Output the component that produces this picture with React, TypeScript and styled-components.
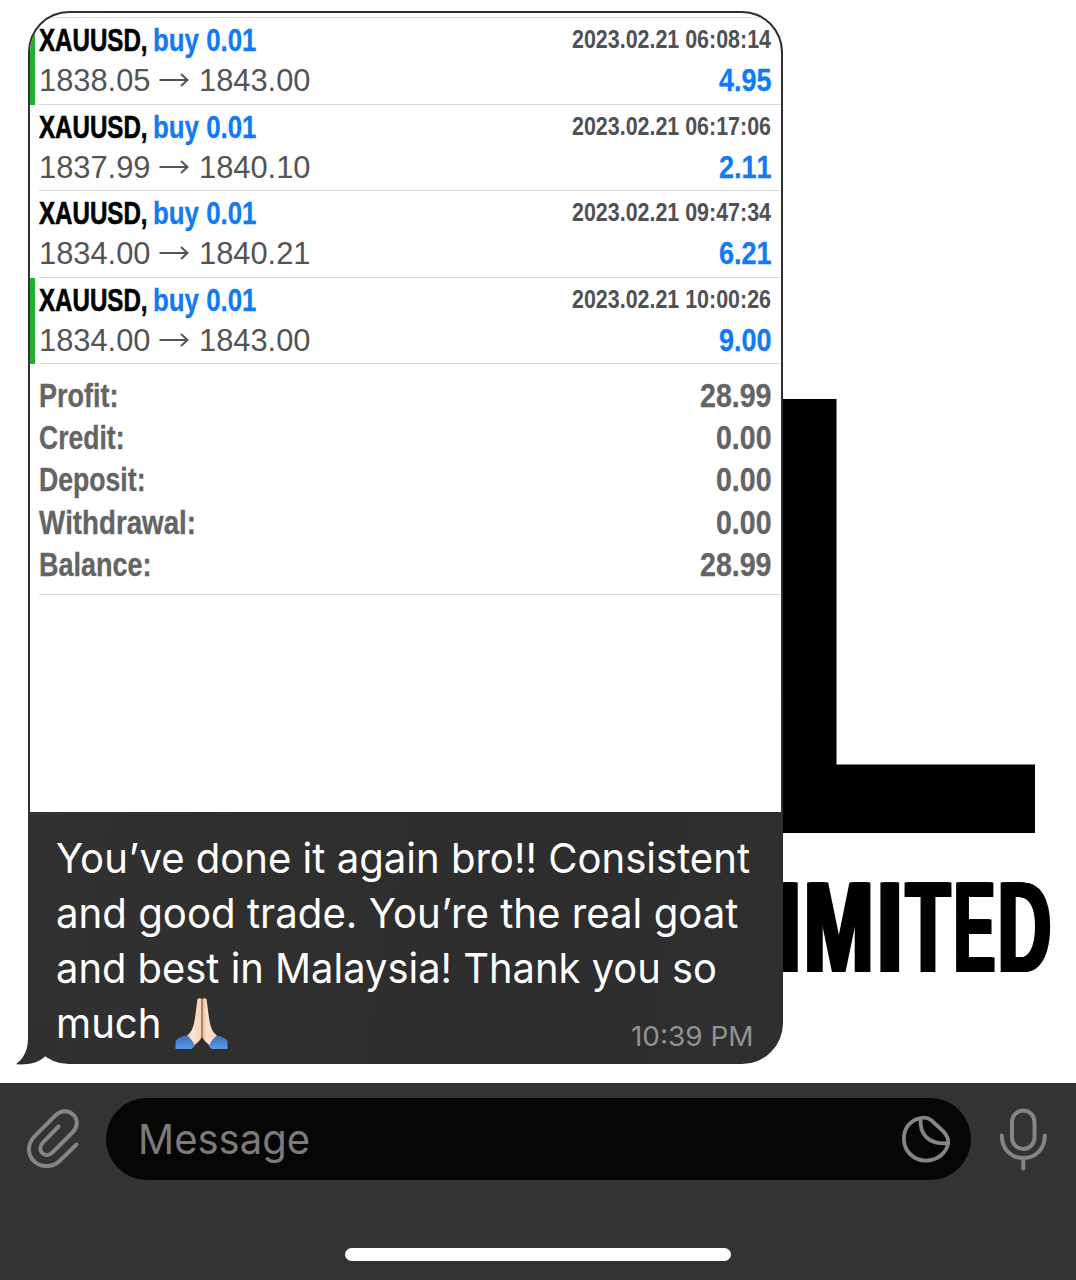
import { useLayoutEffect, useRef, useState } from "react";
import styled, { createGlobalStyle } from "styled-components";

interface Trade {
    time: string;
    open: string;
    close: string;
    profit: string;
    marked?: boolean;
}

const trades: Trade[] = [
    { time: "2023.02.21 06:08:14", open: "1838.05", close: "1843.00", profit: "4.95", marked: true },
    { time: "2023.02.21 06:17:06", open: "1837.99", close: "1840.10", profit: "2.11" },
    { time: "2023.02.21 09:47:34", open: "1834.00", close: "1840.21", profit: "6.21" },
    { time: "2023.02.21 10:00:26", open: "1834.00", close: "1843.00", profit: "9.00", marked: true },
];

const totals = [
    { label: "Profit:", labelWidth: 79.5, value: "28.99", valueWidth: 71.5 },
    { label: "Credit:", labelWidth: 85.5, value: "0.00", valueWidth: 55.5 },
    { label: "Deposit:", labelWidth: 106.5, value: "0.00", valueWidth: 55.5 },
    { label: "Withdrawal:", labelWidth: 157, value: "0.00", valueWidth: 55.5 },
    { label: "Balance:", labelWidth: 112.5, value: "28.99", valueWidth: 71.5 },
];

const lines = [
    { text: "You’ve done it again bro!! Consistent", width: 694 },
    { text: "and good trade. You’re the real goat", width: 682.5 },
    { text: "and best in Malaysia! Thank you so", width: 661 },
];

const GlobalStyle = createGlobalStyle`
  * { box-sizing: border-box; }
  body {
    margin: 0;
    background: #fefefe;
  }
`;

const Screen = styled.div`
  position: relative;
  display: flex;
  flex-direction: column;
  width: 1076px;
  height: 1280px;
  overflow: hidden;
  font-family: "Liberation Sans", Arial, sans-serif;
  font-kerning: none;
`;

/* wallpaper logo behind the chat */
const Wallpaper = styled.div`
  position: absolute;
  top: 399px;
  left: 740px;
  width: 336px;
`;

const LogoMark = styled.svg`
  display: block;
  width: 296px;
  height: 434px;
`;

const LogoText = styled.div`
  display: flex;
  gap: 3.5px;
  margin: 24px 0 0 35.5px;
  color: #000;
  font-size: 130px;
  font-weight: 700;
  line-height: 140px;
  text-shadow: 4px 0 #000, -4px 0 #000, 2px 0 #000, -2px 0 #000;
`;

const Chat = styled.div`
  position: relative;
  height: 1083px;
  padding: 11px 0 0 28px;
`;

const Bubble = styled.div`
  display: flex;
  flex-direction: column;
  width: 755px;
  height: 1053px;
  padding: 2px;
  border-radius: 41px;
  background: linear-gradient(100deg, #323232, #2d2d2d 70%, #2f2f2f);
`;

const Tail = styled.svg`
  position: absolute;
  top: 1023px;
  left: 14px;
  width: 44px;
  height: 42px;
`;

const Report = styled.div`
  height: 799px;
  padding-top: 4px;
  border-radius: 39px 39px 0 0;
  background: #fff;
  overflow: hidden;
`;

const ReportBody = styled.div`
  border-top: 1px solid #dcdcdc;
`;

const TradeRow = styled.div<{ $marked?: boolean }>`
  height: 86.5px;
  padding-left: 4px;
  border-left: 5px solid ${({ $marked }) => ($marked ? "#20b030" : "transparent")};
`;

const TradeContent = styled.div`
  height: 100%;
  padding: 2px 10px 0 0;
  border-bottom: 1px solid #dadada;
`;

const Line = styled.div`
  display: flex;
  justify-content: space-between;
  height: 40.2px;
  line-height: 40px;
`;

const Group = styled.div`
  display: flex;
  align-items: center;
`;

const Symbol = styled.div`
  color: #000;
  font-size: 31.5px;
  font-weight: 700;
  margin-right: 5px;
  -webkit-text-stroke: 0.6px #000;
`;

const Side = styled.div`
  color: #107bf4;
  font-size: 31.5px;
  font-weight: 700;
  -webkit-text-stroke: 0.3px #107bf4;
`;

const Time = styled.div`
  color: #505154;
  font-size: 25px;
  font-weight: 700;
  line-height: 38px;
`;

const Price = styled.div`
  color: #535456;
  font-size: 31.5px;
`;

const Arrow = styled.svg`
  width: 30px;
  height: 16px;
  margin: 0 10.5px 0 8px;
`;

const Totals = styled.div`
  height: 231px;
  margin-left: 9px;
  padding: 10.5px 10px 0 0;
  border-bottom: 1px solid #dcdcdc;
`;

const TotalRow = styled.div`
  display: flex;
  justify-content: space-between;
  height: 42.4px;
  color: #646464;
  font-size: 32.5px;
  font-weight: 700;
  line-height: 42px;
  -webkit-text-stroke: 0.3px #646464;
`;

const Caption = styled.div`
  padding: 19px 28px 0 26px;
  color: #fff;
  font-family: Inter, "Liberation Sans", sans-serif;
  font-size: 41.5px;
  font-kerning: auto;
  line-height: 55px;
`;

const LastLine = styled.div`
  display: flex;
  align-items: flex-start;
`;

const Hands = styled.svg`
  width: 54px;
  height: 52px;
  margin: 2px 0 0 13.5px;
`;

const SentAt = styled.div`
  margin: 23px 0 0 auto;
  color: #929292;
  font-size: 27px;
  line-height: 36px;
`;

const Footer = styled.div`
  position: relative;
  display: flex;
  flex: 1;
  flex-direction: column;
  align-items: center;
  background: #333;
`;

const Composer = styled.div`
  display: flex;
  align-items: center;
  width: 100%;
  height: 82px;
  margin-top: 15.3px;
  padding: 0 28px 0 26px;
`;

const Input = styled.div`
  display: flex;
  align-items: center;
  justify-content: space-between;
  width: 865px;
  height: 82px;
  margin: 0 27px 0 25.5px;
  padding: 0 20px 0 32.5px;
  border-radius: 41px;
  background: #060606;
`;

const Placeholder = styled.div`
  color: #7b7b7b;
  font-family: Inter, "Liberation Sans", sans-serif;
  font-size: 41.5px;
  line-height: 79px;
`;

const Icon = styled.svg`
  flex: none;
  fill: none;
  stroke: #858585;
  stroke-width: 4;
  stroke-linecap: round;
  stroke-linejoin: round;
`;

const HomeIndicator = styled.div`
  width: 386px;
  height: 13px;
  margin-top: 67.7px;
  border-radius: 7px;
  background: #fff;
`;

const FitBox = styled.div<{ $width: number }>`
  width: ${({ $width }) => $width}px;
  white-space: pre;
`;

const FitText = styled.span`
  display: inline-block;
  transform-origin: 0 50%;
`;

// squeezes a run of text into a fixed advance width
function Fit({ width, children }: { width: number; children: string }) {
    const ref = useRef<HTMLSpanElement>(null);
    const [scale, setScale] = useState(1);

    useLayoutEffect(() => {
        if (ref.current) {
            const natural = parseFloat(getComputedStyle(ref.current).width);
            setScale(width / natural);
        }
    }, [width, children]);

    return (
        <FitBox $width={width}>
            <FitText ref={ref} style={{ transform: `scaleX(${scale})` }}>{children}</FitText>
        </FitBox>
    );
}

function TradeItem({ trade }: { trade: Trade }) {
    return (
        <TradeRow $marked={trade.marked}>
            <TradeContent>
                <Line>
                    <Group>
                        <Symbol><Fit width={108.5}>XAUUSD,</Fit></Symbol>
                        <Side><Fit width={103.5}>buy 0.01</Fit></Side>
                    </Group>
                    <Time><Fit width={199}>{trade.time}</Fit></Time>
                </Line>
                <Line>
                    <Group>
                        <Price><Fit width={111.5}>{trade.open}</Fit></Price>
                        <Arrow viewBox="0 0 30 16" fill="none" stroke="#535456" strokeWidth="2">
                            <path d="M0.500 8H28M22 2L28.500 8L22 14" />
                        </Arrow>
                        <Price><Fit width={111.5}>{trade.close}</Fit></Price>
                    </Group>
                    <Side><Fit width={52.5}>{trade.profit}</Fit></Side>
                </Line>
            </TradeContent>
        </TradeRow>
    );
}

function FoldedHands() {
    return (
        <Hands viewBox="0 0 54 52">
            <defs>
                <linearGradient id="sleeve" x1="0" x2="0" y1="0" y2="1">
                    <stop offset="0" stopColor="#3a70b8" />
                    <stop offset="1" stopColor="#5a9be8" />
                </linearGradient>
                <linearGradient id="skin" x1="0" x2="1">
                    <stop offset="0" stopColor="#e9bd9d" />
                    <stop offset=".35" stopColor="#fde3cd" />
                    <stop offset="1" stopColor="#f6d0b4" />
                </linearGradient>
            </defs>
            <path d="M0.500 43C4 39 9 37 14 38L21 44C20.500 48 18 50 16 51H0.500Z" fill="url(#sleeve)" />
            <path d="M52.500 43C49 39 44 37 39 38L33 44C33.500 48 35 50 37 51H52.500Z" fill="url(#sleeve)" />
            <path d="M22.500 1C24 0 26.500 0 26.800 2V38C26 42 23 44 19.500 47C17.500 42 14 39 12 37.500C17 34 18.500 29 20 20Z" fill="url(#skin)" />
            <path d="M31.500 1C30 0 27.500 0 27.200 2V38C28 42 31 44 34.500 47C36.500 42 40 39 42 37.500C37 34 35.500 29 34 20Z" fill="url(#skin)" />
            <path d="M27 2V40" stroke="#8f5c48" strokeWidth="1" />
        </Hands>
    );
}

export default function App() {
    return (
        <Screen>
            <GlobalStyle />
            <Wallpaper>
                <LogoMark viewBox="0 0 296 434">
                    <path d="M0 0H96.500V365.500H295V434H0Z" fill="#000" />
                </LogoMark>
                <LogoText>
                    <Fit width={25}>I</Fit>
                    <Fit width={69.5}>M</Fit>
                    <Fit width={25.5}>I</Fit>
                    <Fit width={44}>T</Fit>
                    <Fit width={41}>E</Fit>
                    <Fit width={53}>D</Fit>
                </LogoText>
            </Wallpaper>

            <Chat>
                <Bubble>
                    <Report>
                        <ReportBody>
                            {trades.map((trade) => (
                                <TradeItem key={trade.time} trade={trade} />
                            ))}
                            <Totals>
                                {totals.map((t) => (
                                    <TotalRow key={t.label}>
                                        <Fit width={t.labelWidth}>{t.label}</Fit>
                                        <Fit width={t.valueWidth}>{t.value}</Fit>
                                    </TotalRow>
                                ))}
                            </Totals>
                        </ReportBody>
                    </Report>
                    <Caption>
                        {lines.map((l) => (
                            <Fit key={l.text} width={l.width}>{l.text}</Fit>
                        ))}
                        <LastLine>
                            <Fit width={105.5}>much</Fit>
                            <FoldedHands />
                            <SentAt><Fit width={122.5}>10:39 PM</Fit></SentAt>
                        </LastLine>
                    </Caption>
                </Bubble>
                <Tail viewBox="0 0 44 42">
                    <path d="M14 0V15C14 27 10 35 2 41.300C14 42 24 40 30.500 34L40 20V0Z" fill="#2f2f2f" />
                </Tail>
            </Chat>

            <Footer>
                <Composer>
                    <Icon width="54" height="62" viewBox="0 0 54 62">
                        <path d="M32.500 18.500L17.300 34.200C13.500 38 13.500 42.500 16.500 45.300C19.500 48 23.500 47.500 26.800 44.200L46.500 24.500C51.500 19.500 52.500 12 47.500 6.800C42.500 1.800 35 2 29.800 7L9 27.800C2.500 34.500 0.500 43.500 6.500 51.500C13 59.500 25.500 60.500 33.500 53L50.500 36.500" />
                    </Icon>
                    <Input>
                        <Placeholder><Fit width={172}>Message</Fit></Placeholder>
                        <Icon width="50" height="50" viewBox="0 0 52 52">
                            <path d="M21.500 4C9.500 6 2.500 15 3 26.500C3.500 39.500 14 48.500 26 48.500C38 48.500 48 40 49 29.500C49.500 25.500 47 21.500 44 18L31.500 6.500C28.500 4 25 3.300 21.500 4Z" />
                            <path d="M20.500 5C19 20.500 28 31.500 48.500 30.500" />
                        </Icon>
                    </Input>
                    <Icon width="50" height="64" viewBox="0 0 50 64">
                        <rect x="14" y="3.500" width="22.500" height="38.500" rx="11.250" />
                        <path d="M3.800 28.500C3.800 42 13 51 25.300 51S46.800 42 46.800 28.500M25.300 51V61.500" />
                    </Icon>
                </Composer>
                <HomeIndicator />
            </Footer>
        </Screen>
    );
}
